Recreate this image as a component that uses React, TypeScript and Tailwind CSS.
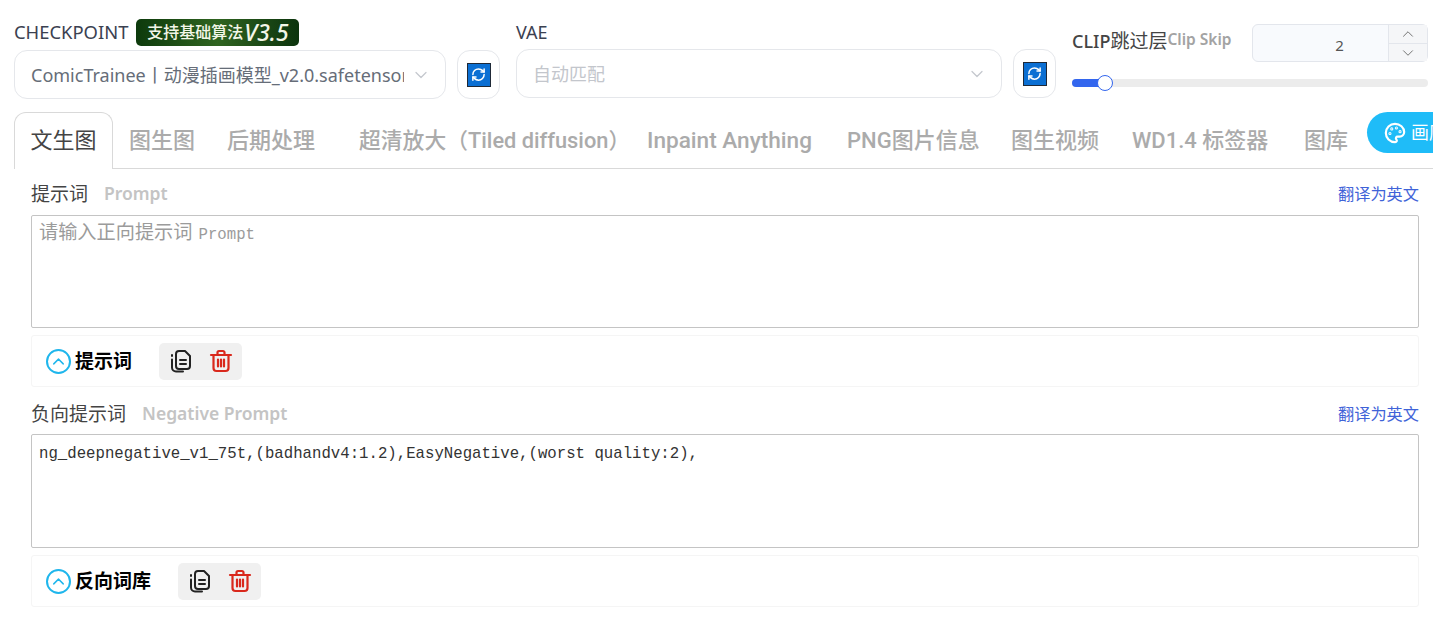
import { ChevronDown, ChevronUp, Palette, RefreshCw } from 'lucide-react'

const sans = 'font-["Noto_Sans","Noto_Sans_CJK_SC",sans-serif]'

function RefreshButton() {
  return (
    <button className="flex h-[49px] w-[43px] shrink-0 items-center justify-center rounded-[13px] border border-[#e5e7eb] bg-white">
      <span className="flex h-[24px] w-[24px] items-center justify-center border border-[#1f2937] bg-[#0b6fd3]">
        <RefreshCw size={15} strokeWidth={2.4} className="text-white" />
      </span>
    </button>
  )
}

function CopyIcon() {
  return (
    <svg width="22" height="24" viewBox="0 0 22 24" fill="none" stroke="#222" strokeWidth="2" strokeLinecap="round" strokeLinejoin="round">
      {/* front sheet with folded corner */}
      <path d="M7 17V5a3 3 0 0 1 3-3h6l5 5v10a3 3 0 0 1-3 3h-8a3 3 0 0 1-3-3z" />
      {/* sheet behind */}
      <path d="M3 6v1M3 10.500v8a4 4 0 0 0 4 4h7" />
      <path d="M11 11h6M11 15h6" />
    </svg>
  )
}

function TrashIcon() {
  return (
    <svg width="24" height="24" viewBox="0 0 24 24" fill="none" stroke="#d9281c" strokeWidth="2.200" strokeLinecap="round" strokeLinejoin="round">
      <path d="M2 6h20" />
      <path d="M8.500 6V3.500a1.500 1.500 0 0 1 1.500-1.500h4a1.500 1.500 0 0 1 1.500 1.500V6" />
      <path d="M4.500 6v13a3 3 0 0 0 3 3h9a3 3 0 0 0 3-3V6" />
      <path d="M9 10.500v7M12 10.500v7M15 10.500v7" />
    </svg>
  )
}

function Toolbar({ label, className }: { label: string; className: string }) {
  return (
    <div className={`flex h-[52px] items-center rounded-[3px] border border-[#f5f5f5] pl-[14px] ${className}`}>
      <span className="flex h-[25px] w-[25px] items-center justify-center rounded-full border-2 border-[#1fb6ec]">
        <ChevronUp size={19} strokeWidth={1.8} className="text-[#1fb6ec]" />
      </span>
      <span className="ml-[4px] text-[19px] leading-none font-bold text-black">{label}</span>
      <div className="ml-[27px] flex h-[37px] w-[83px] items-center justify-center gap-[18px] rounded-[5px] bg-[#f0f0f0]">
        <CopyIcon />
        <TrashIcon />
      </div>
    </div>
  )
}

function FieldHeading({ title, hint }: { title: string; hint: string }) {
  return (
    <div className="flex h-[26px] items-center justify-between">
      <div className="flex items-center">
        <span className="text-[19px] leading-none text-[#444]">{title}</span>
        <span className="ml-[16px] text-[17.500px] leading-none font-semibold text-[#c4c4c4]">{hint}</span>
      </div>
      <a className="text-[16.200px] leading-none text-[#3f63d8]">翻译为英文</a>
    </div>
  )
}

const tabs = [
  { label: '图生图', className: 'w-[98px] text-[22px]' },
  { label: '后期处理', className: 'w-[132px] text-[22px]' },
  { label: '超清放大（Tiled diffusion）', className: 'w-[288px] text-[21.800px]' },
  { label: 'Inpaint Anything', className: 'w-[200px] text-[22.600px]' },
  { label: 'PNG图片信息', className: 'w-[164px] text-[22px]' },
  { label: '图生视频', className: 'w-[121px] text-[22px]' },
  { label: 'WD1.4 标签器', className: 'w-[172px] text-[22px]' },
  { label: '图库', className: 'w-[72px] text-[22px]' },
]

export default function App() {
  return (
    <div className={`h-[628px] w-[1433px] overflow-hidden bg-white ${sans}`}>
      {/* Model selectors */}
      <div className="flex px-[14px] pt-[18px]">
        <div className="w-[432px] shrink-0">
          <div className="flex h-[28px] items-center">
            <span className="text-[18.400px] leading-none text-[#3b4151]">CHECKPOINT</span>
            <span className="ml-[8px] flex h-[27px] w-[163px] items-center justify-center rounded-[5px] bg-gradient-to-r from-[#0d3a0c] via-[#2f6420] to-[#0c340d] text-[16px] font-medium text-[#f3f6e8]">
              支持基础算法<span className="ml-[1px] text-[23px] leading-none italic">V3.5</span>
            </span>
          </div>
          <div className="mt-[4px] flex h-[49px] items-center rounded-[13px] border border-[#e5e7eb] pr-[14px] pl-[16px]">
            <span className="w-[373px] overflow-hidden text-[18px] leading-[26px] whitespace-nowrap text-[#666d78]">
              ComicTrainee丨动漫插画模型_v2.0.safetensors
            </span>
            <ChevronDown size={20} strokeWidth={1.5} className="ml-auto text-[#c5c8ce]" />
          </div>
        </div>
        <div className="mt-[32px] ml-[11px]">
          <RefreshButton />
        </div>
        <div className="ml-[16px] w-[486px] shrink-0">
          <div className="flex h-[28px] items-center text-[18px] leading-none text-[#3b4151]">VAE</div>
          <div className="mt-[3px] flex h-[49px] items-center rounded-[13px] border border-[#e5e7eb] pr-[14px] pl-[16px]">
            <span className="text-[18px] leading-none text-[#c3c6cc]">自动匹配</span>
            <ChevronDown size={20} strokeWidth={1.5} className="ml-auto text-[#c5c8ce]" />
          </div>
        </div>
        <div className="mt-[31px] ml-[11px]">
          <RefreshButton />
        </div>
        <div className="ml-[16px] w-[356px] shrink-0">
          <div className="flex h-[44px] items-start">
            <span className="mt-[12px] shrink-0 text-[18px] leading-[22px] font-medium whitespace-nowrap text-[#444]">
              CLIP<span className="text-[19px] font-normal">跳过层</span>
            </span>
            <span className="mt-[12px] shrink-0 text-[15.500px] leading-[18px] font-semibold whitespace-nowrap text-[#a3a3a3]">Clip Skip</span>
            <div className="mt-[6px] ml-auto flex h-[38px] w-[176px] shrink-0 rounded-[6px] border border-[#e3e6ec] bg-[#f8fafd]">
              <span className="flex flex-1 items-center justify-center pt-[4px] pl-[38px] text-[15px] text-[#555]">2</span>
              <div className="flex w-[39px] flex-col border-l border-[#e3e6ec] bg-[#f5f6f8]">
                <span className="flex h-[20px] items-center justify-center border-b border-[#e3e6ec]">
                  <ChevronUp size={18} strokeWidth={1.2} className="text-[#666]" />
                </span>
                <span className="flex flex-1 items-center justify-center">
                  <ChevronDown size={18} strokeWidth={1.2} className="text-[#666]" />
                </span>
              </div>
            </div>
          </div>
          <div className="relative mt-[17px] h-[8px] rounded-full bg-[#ececec]">
            <div className="h-full w-[30px] rounded-full bg-[#3366ee]" />
            <div className="absolute top-[-4px] left-[25px] h-[16px] w-[16px] rounded-full border border-[#3366ee] bg-white" />
          </div>
        </div>
      </div>

      {/* Tabs */}
      <div className="relative mt-[13px] ml-[14px] flex h-[57px] border-b border-[#d9d9d9]">
        <div className="h-[57px] w-[99px] rounded-t-[12px] border border-b-0 border-[#d9d9d9] bg-white text-center text-[22px] leading-[52px] text-[#444]">
          文生图
        </div>
        {tabs.map((tab) => (
          <div key={tab.label} className={`${tab.className} shrink-0 pt-[15px] pl-[16px] font-['Roboto','Noto_Sans_CJK_SC',sans-serif] leading-[28px] font-medium whitespace-nowrap text-[#ababab]`}>
            {tab.label}
          </div>
        ))}
        <div className="absolute top-0 left-[1353px] flex h-[41px] w-[100px] items-center rounded-full bg-[#1fbcf8] pl-[17px] text-[18px] text-white">
          <Palette size={22} strokeWidth={2.4} />
          <span className="ml-[5px]">画廊</span>
        </div>
      </div>

      {/* Prompts */}
      <div className="pr-[14px] pl-[31px]">
        <div className="mt-[12px]">
          <FieldHeading title="提示词" hint="Prompt" />
        </div>
        <div className="mt-[8px] h-[113px] rounded-[2px] border border-[#c4c4c4] px-[7px] pt-[6px] font-['Liberation_Mono','Noto_Sans_CJK_SC',monospace] leading-[24px] text-[#9b9b9b]">
          <span className="text-[19.200px]">请输入正向提示词</span>
          <span className="ml-[6px] text-[15.700px]">Prompt</span>
        </div>
        <Toolbar label="提示词" className="mt-[7px]" />
        <div className="mt-[14px]">
          <FieldHeading title="负向提示词" hint="Negative Prompt" />
        </div>
        <div className="mt-[7px] h-[114px] rounded-[2px] border border-[#c4c4c4] px-[7px] pt-[7px] font-['Liberation_Mono',monospace] text-[15.700px] leading-[24px] text-[#333]">
          ng_deepnegative_v1_75t,(badhandv4:1.2),EasyNegative,(worst quality:2),
        </div>
        <Toolbar label="反向词库" className="mt-[7px]" />
      </div>
    </div>
  )
}
